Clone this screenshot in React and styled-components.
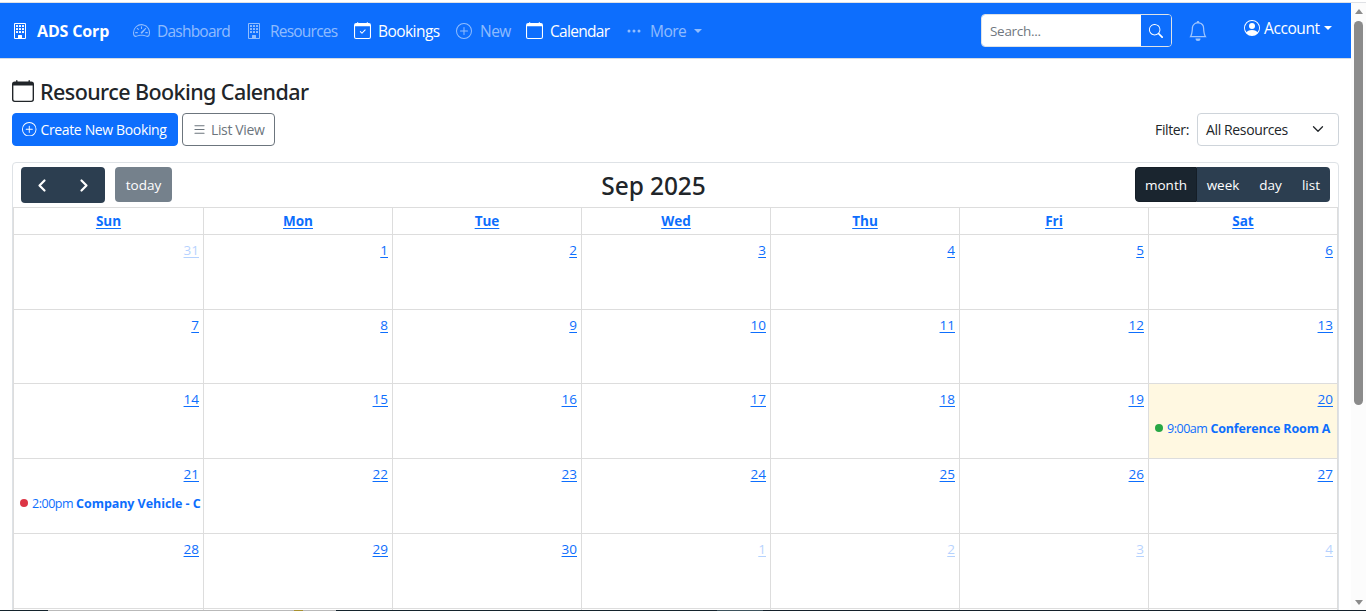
import React from "react";
import styled, { createGlobalStyle } from "styled-components";
import {
  BsBuilding, BsSpeedometer2, BsCalendarCheck, BsPlusCircle, BsCalendar,
  BsThreeDots, BsSearch, BsBell, BsPersonCircle, BsList,
} from "react-icons/bs";

const GlobalStyle = createGlobalStyle`
  *, *::before, *::after { box-sizing: border-box; }
  body {
    margin: 0;
    overflow: hidden;
    background: #fff;
    color: #212529;
    font-family: "Open Sans", "Noto Sans", sans-serif;
    font-size: 13px;
  }
  button, input { font: inherit; letter-spacing: inherit; margin: 0; }
  svg { display: block; flex: none; }
`;

const Shell = styled.div`
  width: 1366px;
  height: 611px;
  display: flex;
  flex-direction: column;
  overflow: hidden;
`;
const TopEdge = styled.div`
  flex: none;
  height: 3px;
  border-bottom: 1px solid #dfe1e5;
`;
const Viewport = styled.div`
  flex: 1;
  min-height: 0;
  display: flex;
`;
const Page = styled.div`
  width: 1351px;
  overflow: hidden;
`;
const BottomEdge = styled.div`
  flex: none;
  height: 1px;
  background: linear-gradient(90deg, #14232c 48px, #b9b9b9 48px 294px, #a8912f 294px 303px, #b9b9b9 303px 336px, #14232c 336px 717px, #3d525c 717px 763px, #14202a 763px);
`;

const Navbar = styled.nav`
  display: flex;
  height: 56px;
  padding: 0 19px 0 12px;
  background: #0d6efd;
  color: #fff;
  border-bottom: 1px solid #d5dbe3;
`;
const Brand = styled.a`
  display: flex;
  align-items: center;
  width: 121px;
  padding-top: 1px;
  font-size: 16px;
  font-weight: 700;
  letter-spacing: -0.15px;
  white-space: nowrap;
  svg { margin: 0 9px 1px 0; }
`;
const NavItem = styled.a`
  display: flex;
  align-items: center;
  width: ${(p) => p.$w}px;
  padding-top: 1px;
  font-size: 15.5px;
  letter-spacing: ${(p) => p.$ls || 0}px;
  white-space: nowrap;
  color: ${(p) => (p.$active ? "#fff" : "rgba(255,255,255,.55)")};
  svg { margin: 0 ${(p) => p.$gap || 7}px 1px 0; }
`;
const Caret = styled.span`
  margin-left: ${(p) => p.$gap || 8}px;
  border: 4px solid transparent;
  border-top-color: currentColor;
  border-bottom: 0;
`;
const Search = styled.form`
  display: flex;
  width: 191px;
  height: 33px;
  margin: 11px 0 0 auto;
  border: 1px solid #dee2e6;
  border-radius: 4px;
  overflow: hidden;
`;
const SearchInput = styled.input`
  width: 159px;
  border: 0;
  padding: 0 8px;
  font-size: 13.5px;
  letter-spacing: -0.3px;
  background: #fff;
  &::placeholder { color: #70777e; opacity: 1; }
`;
const SearchButton = styled.button`
  flex: 1;
  display: grid;
  place-items: center;
  border: 0;
  padding: 0 1px 0 0;
  background: #0d6efd;
  color: #fff;
`;
const Bell = styled.span`
  width: 20px;
  margin: 18px 36px 0 16px;
  color: rgba(255,255,255,.6);
`;
const Account = styled.a`
  display: flex;
  align-items: center;
  width: 88px;
  height: 50px;
  font-size: 15.5px;
  letter-spacing: -0.4px;
  white-space: nowrap;
  svg { margin-right: 4px; }
`;

const Main = styled.main`
  padding: 0 12px;
`;
const Title = styled.h1`
  display: flex;
  align-items: center;
  height: 30px;
  margin: 17px 0 0;
  font-family: "Noto Sans", "Open Sans", sans-serif;
  font-size: 21.5px;
  font-weight: 500;
  letter-spacing: -0.58px;
  white-space: nowrap;
  svg { margin-right: 6px; }
`;
const Actions = styled.div`
  display: flex;
  gap: 4px;
  height: 33px;
  margin-top: 7px;
`;
const ActionButton = styled.button`
  display: flex;
  align-items: center;
  width: ${(p) => p.$w}px;
  padding: 0 0 0 9px;
  border: 1px solid ${(p) => (p.$primary ? "#0d6efd" : "#6c757d")};
  border-radius: 4px;
  background: ${(p) => (p.$primary ? "#0d6efd" : "#fff")};
  color: ${(p) => (p.$primary ? "#fff" : "#6c757d")};
  font-size: 14px;
  letter-spacing: -0.36px;
  white-space: nowrap;
  svg { margin: 0 4px 1px 0; }
`;
const Filter = styled.label`
  display: flex;
  align-items: center;
  margin-left: auto;
  font-size: 14px;
  letter-spacing: -0.37px;
  white-space: nowrap;
`;
const Select = styled.span`
  display: flex;
  align-items: center;
  justify-content: space-between;
  width: 142px;
  height: 33px;
  margin-left: 8px;
  padding: 0 14px 0 8px;
  border: 1px solid #ced4da;
  border-radius: 4px;
  svg { margin-bottom: 2px; }
`;

const Card = styled.section`
  margin-top: 16px;
  width: 1327px;
  border: 1px solid #dee2e6;
  border-radius: 4px;
`;
const Toolbar = styled.header`
  display: flex;
  justify-content: space-between;
  height: 44px;
  padding: 4px 8px 0;
`;
const ToolGroup = styled.div`
  display: flex;
`;
const ToolButton = styled.button`
  width: ${(p) => p.$w}px;
  height: ${(p) => p.$h || 35}px;
  margin-left: ${(p) => p.$gap || 0}px;
  padding: ${(p) => (p.$h ? 0 : "1px")} 0 0;
  display: flex;
  align-items: center;
  justify-content: center;
  border: ${(p) => (p.$active ? "1px solid #151e27" : "0")};
  border-radius: ${(p) => p.$r || "0"};
  background: ${(p) => (p.$active ? "#1a252f" : "#2c3e50")};
  opacity: ${(p) => (p.$disabled ? 0.65 : 1)};
  color: #fff;
  font-size: 13.5px;
`;
const Month = styled.h2`
  margin: 2px 0 0;
  font-family: "Noto Sans", "Open Sans", sans-serif;
  font-size: 24.5px;
  line-height: 34px;
  font-weight: 500;
  letter-spacing: -0.1px;
`;
const Grid = styled.div`
  display: grid;
  grid-template-columns: 190px repeat(6, 189px);
  grid-template-rows: 27px 75px 74px 75px 75px 75px 40px;
  border-top: 1px solid #ddd;
  border-left: 1px solid #ddd;
`;
const DayName = styled.a`
  border-right: 1px solid #ddd;
  border-bottom: 1px solid #ddd;
  color: #0d6efd;
  font-weight: 700;
  font-size: 13.5px;
  line-height: 26px;
  text-align: center;
  text-decoration: underline;
  text-underline-offset: 2px;
`;
const Cell = styled.div`
  min-width: 0;
  border-right: 1px solid #ddd;
  border-bottom: 1px solid #ddd;
  background: ${(p) => (p.$today ? "#fff8e1" : "#fff")};
`;
const DayNumber = styled.a`
  display: block;
  padding: 5px 4px 0 0;
  line-height: 20px;
  text-align: right;
  font-size: 13.5px;
  color: #0d6efd;
  opacity: ${(p) => (p.$other ? 0.3 : 1)};
  text-decoration: underline;
  text-underline-offset: 2px;
`;
const Event = styled.a`
  display: flex;
  align-items: center;
  height: 19px;
  margin: 9px 2px 0 6px;
  color: #0d6efd;
  font-size: 12.5px;
  white-space: nowrap;
`;
const Dot = styled.i`
  flex: none;
  width: 8px;
  height: 8px;
  margin-right: 4px;
  border-radius: 50%;
  background: ${(p) => p.$color};
`;
const Time = styled.span`
  flex: none;
  margin: 1px 3px 0 0;
  letter-spacing: -0.48px;
`;
const EventTitle = styled.b`
  margin-top: 1px;
  letter-spacing: ${(p) => p.$ls}px;
`;

const Scrollbar = styled.div`
  width: 15px;
  display: flex;
  flex-direction: column;
  align-items: center;
  background: #fcfcfc;
  padding: 6px 0 5px;
`;
const Arrow = styled.i`
  border: 4.5px solid transparent;
  border-top-width: ${(p) => (p.$down ? "5px" : 0)};
  border-bottom-width: ${(p) => (p.$down ? 0 : "5px")};
  border-top-color: #8b8b8b;
  border-bottom-color: #8b8b8b;
`;
const Thumb = styled.div`
  width: 9px;
  height: 384px;
  margin: 7px 0 auto;
  border-radius: 5px;
  background: #8b8b8b;
`;

const Chevron = ({ d, size, width = 1.7 }) => (
  <svg width={size} height={size} viewBox="0 0 16 16" fill="none" stroke="currentColor" strokeWidth={width}>
    <path d={d} strokeLinecap="round" strokeLinejoin="round" />
  </svg>
);

const weekdays = ["Sun", "Mon", "Tue", "Wed", "Thu", "Fri", "Sat"];
const start = new Date(2025, 7, 31);
const days = Array.from({ length: 42 }, (_, i) => {
  const d = new Date(start);
  d.setDate(start.getDate() + i);
  return { n: d.getDate(), m: d.getMonth() };
});
const events = {
  20: { time: "9:00am", title: "Conference Room A", color: "#28a745", ls: -0.14 },
  21: { time: "2:00pm", title: "Company Vehicle - C", color: "#dc3545", ls: -0.06 },
};

export default function App() {
  return (
    <Shell>
      <GlobalStyle />
      <TopEdge />
      <Viewport>
        <Page>
          <Navbar>
            <Brand><BsBuilding size={16} />ADS Corp</Brand>
            <NavItem $w={113} $ls={-0.78}><BsSpeedometer2 size={17} />Dashboard</NavItem>
            <NavItem $w={108} $ls={-0.78} $gap={8}><BsBuilding size={16} />Resources</NavItem>
            <NavItem $w={102} $ls={-0.55} $active><BsCalendarCheck size={17} />Bookings</NavItem>
            <NavItem $w={70} $ls={-0.5} $gap={8}><BsPlusCircle size={16} />New</NavItem>
            <NavItem $w={100} $ls={-0.7} $active><BsCalendar size={17} />Calendar</NavItem>
            <NavItem $w={90} $ls={-0.5} $gap={8}><BsThreeDots size={16} />More<Caret /></NavItem>
            <Search>
              <SearchInput placeholder="Search..." />
              <SearchButton type="button"><BsSearch size={14} /></SearchButton>
            </Search>
            <Bell><BsBell size={20} /></Bell>
            <Account><BsPersonCircle size={16} />Account<Caret $gap={4} /></Account>
          </Navbar>
          <Main>
            <Title><BsCalendar size={22} />Resource Booking Calendar</Title>
            <Actions>
              <ActionButton $primary $w={166}><BsPlusCircle size={14.5} />Create New Booking</ActionButton>
              <ActionButton $w={93}><BsList size={15} />List View</ActionButton>
              <Filter>
                Filter:
                <Select>All Resources<Chevron size={12} d="M2 5l6 6 6-6" /></Select>
              </Filter>
            </Actions>
            <Card>
              <Toolbar>
                <ToolGroup>
                  <ToolButton $w={42} $h={36} $r="4px 0 0 4px"><Chevron size={16} width={2.2} d="M10.5 3.5l-5 5 5 5" /></ToolButton>
                  <ToolButton $w={42} $h={36} $r="0 4px 4px 0"><Chevron size={16} width={2.2} d="M5.5 3.5l5 5-5 5" /></ToolButton>
                  <ToolButton $w={57} $gap={10} $r="4px" $disabled>today</ToolButton>
                </ToolGroup>
                <Month>Sep 2025</Month>
                <ToolGroup>
                  <ToolButton $w={62} $r="4px 0 0 4px" $active>month</ToolButton>
                  <ToolButton $w={52}>week</ToolButton>
                  <ToolButton $w={43}>day</ToolButton>
                  <ToolButton $w={38} $r="0 4px 4px 0">list</ToolButton>
                </ToolGroup>
              </Toolbar>
              <Grid>
                {weekdays.map((d) => <DayName key={d}>{d}</DayName>)}
                {days.map(({ n, m }, i) => {
                  const ev = m === 8 && events[n];
                  return (
                    <Cell key={i} $today={m === 8 && n === 20}>
                      {i < 35 && <DayNumber $other={m !== 8}>{n}</DayNumber>}
                      {ev && (
                        <Event>
                          <Dot $color={ev.color} />
                          <Time>{ev.time}</Time>
                          <EventTitle $ls={ev.ls}>{ev.title}</EventTitle>
                        </Event>
                      )}
                    </Cell>
                  );
                })}
              </Grid>
            </Card>
          </Main>
        </Page>
        <Scrollbar>
          <Arrow />
          <Thumb />
          <Arrow $down />
        </Scrollbar>
      </Viewport>
      <BottomEdge />
    </Shell>
  );
}
